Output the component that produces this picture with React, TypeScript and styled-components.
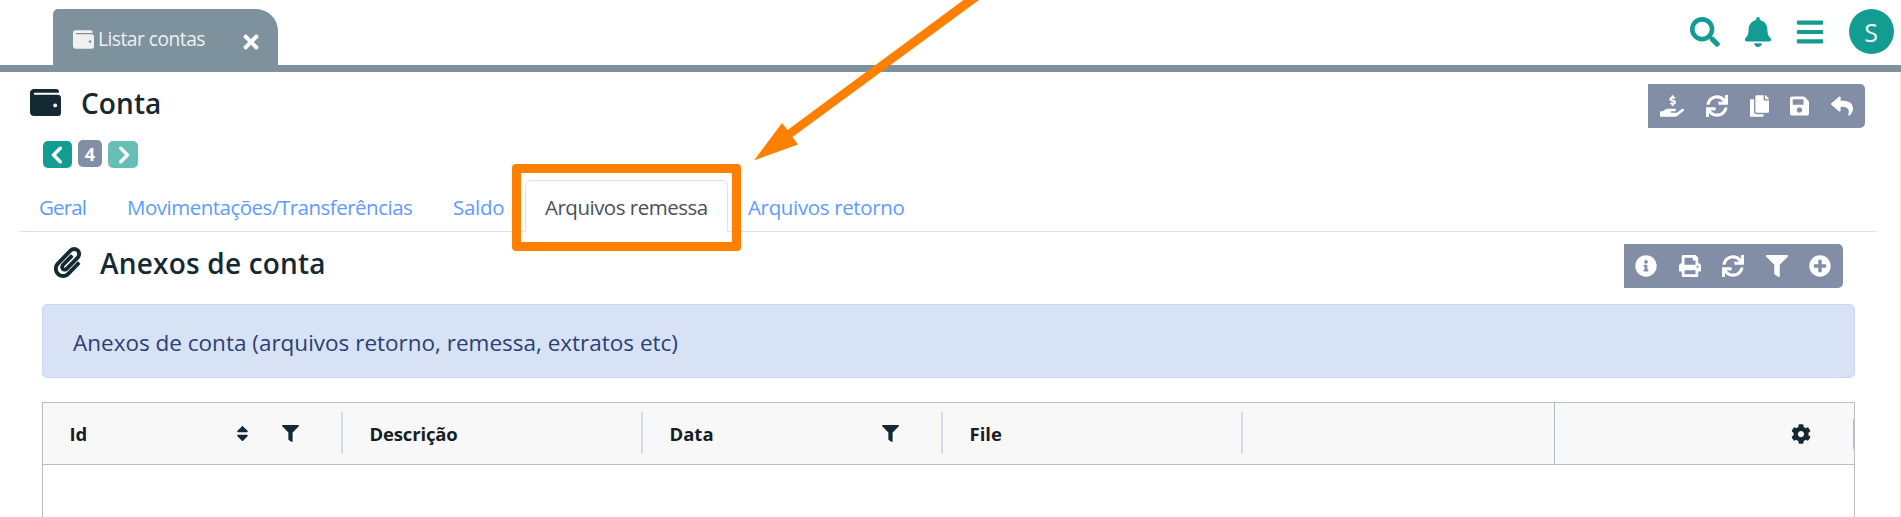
import React from "react";
import styled, { createGlobalStyle } from "styled-components";
import {
  FaWallet, FaTimes, FaSearch, FaBell, FaBars, FaHandHoldingUsd, FaSync, FaCopy, FaSave, FaReply,
  FaPaperclip, FaInfoCircle, FaPrint, FaFilter, FaPlusCircle, FaSort, FaCog,
} from "react-icons/fa";
import { FaChevronLeft, FaChevronRight } from "react-icons/fa6";

const Global = createGlobalStyle`
  * { box-sizing: border-box; }
  body { margin: 0; background: #fff; overflow: hidden; font-family: "Open Sans", "Noto Sans", sans-serif; color: #152935; }
  svg { display: block; flex: none; }
`;

const Page = styled.div`
  position: relative;
  height: 517px;
  overflow: hidden;
`;

const TopBar = styled.header`
  display: flex;
  align-items: flex-start;
  justify-content: space-between;
  height: 72px;
  padding: 9px 7px 0 53px;
  border-bottom: 7px solid #7d929d;
`;

const WindowTab = styled.div`
  display: flex;
  align-items: center;
  width: 225px;
  height: 56px;
  padding: 4px 16px 0 20px;
  border-radius: 5px 22px 0 0;
  background: #7d929d;
  color: #f0f0f0;
`;

const TabLabel = styled.span`
  margin-left: 4px;
  font-size: 19.2px;
  line-height: 24px;
  letter-spacing: -0.5px;
  white-space: nowrap;
`;

const CloseIcon = styled(FaTimes)`
  margin: 5px 0 0 auto;
  color: #fff;
`;

const TopActions = styled.div`
  display: flex;
  align-items: flex-start;
  color: #139c92;
`;

const TopIcon = styled.span<{ $gap: number }>`
  display: flex;
  margin: 8px ${(p) => p.$gap}px 0 0;
`;

const Avatar = styled.div`
  display: flex;
  align-items: center;
  justify-content: center;
  width: 45px;
  height: 45px;
  padding-right: 1px;
  border-radius: 50%;
  background: #139c92;
  color: #f4f4f4;
  font-size: 25px;
`;

const Main = styled.main`
  height: 445px;
  border-right: 2px solid #f1f1f1;
`;

const TitleRow = styled.div<{ $pad: string; $h: number }>`
  display: flex;
  align-items: flex-start;
  height: ${(p) => p.$h}px;
  padding: ${(p) => p.$pad};
`;

const TitleIcon = styled.span`
  display: flex;
  margin-top: 3px;
`;

const Title = styled.h1<{ $gap: number; $ls: number }>`
  margin: 0 0 0 ${(p) => p.$gap}px;
  font-size: 28px;
  font-weight: 600;
  line-height: 38px;
  letter-spacing: ${(p) => p.$ls}px;
  white-space: nowrap;
`;

const Toolbar = styled.div<{ $w: number; $pad: string }>`
  display: flex;
  align-items: center;
  justify-content: space-between;
  width: ${(p) => p.$w}px;
  height: 44px;
  margin-left: auto;
  padding: ${(p) => p.$pad};
  border-radius: 0 5px 5px 0;
  background: #828da6;
  color: #fff;
`;

const ToolIcon = styled.span<{ $w?: number }>`
  display: flex;
  width: ${(p) => p.$w ?? 22}px;

  svg {
    width: 100%;
    height: 22px;
  }
`;

const Pager = styled.div`
  display: flex;
  gap: 6px;
  height: 40px;
  padding-left: 43px;
`;

const PageButton = styled.button<{ $w: number; $bg: string; $up?: boolean }>`
  display: flex;
  align-items: center;
  justify-content: center;
  width: ${(p) => p.$w}px;
  height: 27px;
  margin-top: ${(p) => (p.$up ? 0 : 1)}px;
  padding: 0;
  border: 0;
  border-radius: 5px;
  background: ${(p) => p.$bg};
  color: #fff;
  font: 700 18px "Open Sans", sans-serif;

  path {
    stroke: currentColor;
    stroke-width: 34px;
  }
`;

const Tabs = styled.nav`
  display: flex;
  height: 52px;
  margin: 0 22px 0 19px;
  border-bottom: 1px solid #dee2e6;
`;

const TabItem = styled.a<{ $w: number; $active?: boolean; $ls: number }>`
  width: ${(p) => p.$w}px;
  height: 52px;
  padding: 12px 0 0 19px;
  border: 1px solid transparent;
  border-color: ${(p) => (p.$active ? "#dfe1e8 #dfe1e8 #fff" : "transparent")};
  border-radius: 6px 6px 0 0;
  color: ${(p) => (p.$active ? "#495057" : "#5e9bff")};
  font-size: 20.5px;
  line-height: 29px;
  letter-spacing: ${(p) => p.$ls}px;
  white-space: nowrap;
`;

const Alert = styled.div`
  height: 74px;
  margin: 0 44px 24px 42px;
  padding: 21px 30px;
  border: 1px solid #c9d6f5;
  border-radius: 5px;
  background: #d8e2f5;
  color: #2b3f75;
  font-size: 22.5px;
  line-height: 34px;
`;

const Grid = styled.div`
  height: 130px;
  margin: 0 44px 0 42px;
  border: 1px solid #babfc7;
`;

const GridHeader = styled.div`
  display: flex;
  height: 62px;
  border-bottom: 1px solid #babfc7;
  background: #f8f8f8;
`;

const HeaderCell = styled.div`
  display: flex;
  align-items: center;
  width: 300px;
  height: 42px;
  margin-top: 9px;
  padding: 0 42px 0 26.5px;
  border-right: 2px solid #d8dde2;
`;

const HeaderLabel = styled.span<{ $ls?: number }>`
  margin-right: auto;
  color: #181d1f;
  font-size: 18.5px;
  font-weight: 700;
  letter-spacing: ${(p) => p.$ls ?? 0}px;
`;

const SortIcon = styled(FaSort)`
  margin-right: 30px;
`;

const EmptyHeader = styled.div`
  width: 312px;
  border-right: 1px solid #babfc7;
`;

const SettingsCell = styled.div`
  display: flex;
  flex: 1;
  align-items: center;
  justify-content: flex-end;
`;

const ResizeHandle = styled.span`
  width: 1px;
  height: 30px;
  margin-left: 42px;
  background: #babfc7;
`;

const HighlightBox = styled.div`
  position: absolute;
  left: 512px;
  top: 164px;
  width: 229px;
  height: 87px;
  border: 9px solid #ff8000;
  border-radius: 4px;
`;

const Arrow = styled.svg`
  position: absolute;
  left: 740px;
  top: 0;
`;

export default function App() {
  return (
    <Page>
      <Global />
      <TopBar>
        <WindowTab>
          <FaWallet size={21} />
          <TabLabel>Listar contas</TabLabel>
          <CloseIcon size={22} />
        </WindowTab>
        <TopActions>
          <TopIcon $gap={23}><FaSearch size={30} /></TopIcon>
          <TopIcon $gap={22}><FaBell size={30} /></TopIcon>
          <TopIcon $gap={24}><FaBars size={30} /></TopIcon>
          <Avatar>S</Avatar>
        </TopActions>
      </TopBar>
      <Main>
        <TitleRow $h={68} $pad="12px 34px 0 30px">
          <TitleIcon><FaWallet size={31} /></TitleIcon>
          <Title $gap={20} $ls={0.1}>Conta</Title>
          <Toolbar $w={217} $pad="0 12px">
            <ToolIcon $w={24}><FaHandHoldingUsd /></ToolIcon>
            <ToolIcon><FaSync /></ToolIcon>
            <ToolIcon $w={19}><FaCopy /></ToolIcon>
            <ToolIcon $w={19}><FaSave /></ToolIcon>
            <ToolIcon><FaReply /></ToolIcon>
          </Toolbar>
        </TitleRow>
        <Pager>
          <PageButton $w={29} $bg="#139c92"><FaChevronLeft size={18} /></PageButton>
          <PageButton $w={24} $bg="#828da6" $up>4</PageButton>
          <PageButton $w={30} $bg="#65bfb7"><FaChevronRight size={18} /></PageButton>
        </Pager>
        <Tabs>
          <TabItem $w={88} $ls={-0.85}>Geral</TabItem>
          <TabItem $w={326} $ls={-0.5}>Movimentações/Transferências</TabItem>
          <TabItem $w={92} $ls={-0.3}>Saldo</TabItem>
          <TabItem $w={203} $ls={-0.5} $active>Arquivos remessa</TabItem>
          <TabItem $w={200} $ls={-0.35}>Arquivos retorno</TabItem>
        </Tabs>
        <TitleRow $h={72} $pad="12px 56px 0 52px">
          <TitleIcon><FaPaperclip size={31} /></TitleIcon>
          <Title $gap={17} $ls={0.2}>Anexos de conta</Title>
          <Toolbar $w={219} $pad="0 12px 0 11px">
            <ToolIcon><FaInfoCircle /></ToolIcon>
            <ToolIcon><FaPrint /></ToolIcon>
            <ToolIcon><FaSync /></ToolIcon>
            <ToolIcon><FaFilter /></ToolIcon>
            <ToolIcon><FaPlusCircle /></ToolIcon>
          </Toolbar>
        </TitleRow>
        <Alert>Anexos de conta (arquivos retorno, remessa, extratos etc)</Alert>
        <Grid>
          <GridHeader>
            <HeaderCell><HeaderLabel>Id</HeaderLabel><SortIcon size={19} /><FaFilter size={17} /></HeaderCell>
            <HeaderCell><HeaderLabel $ls={-0.15}>Descrição</HeaderLabel></HeaderCell>
            <HeaderCell><HeaderLabel>Data</HeaderLabel><FaFilter size={17} /></HeaderCell>
            <HeaderCell><HeaderLabel>File</HeaderLabel></HeaderCell>
            <EmptyHeader />
            <SettingsCell><FaCog size={20} /><ResizeHandle /></SettingsCell>
          </GridHeader>
        </Grid>
      </Main>
      <HighlightBox />
      <Arrow width="260" height="180" viewBox="0 0 260 180">
        <path fill="#ff8000" d="M14 160.5L42 123l5.500 7L223.500 0H239L52.500 137l5.500 7.500z" />
      </Arrow>
    </Page>
  );
}
